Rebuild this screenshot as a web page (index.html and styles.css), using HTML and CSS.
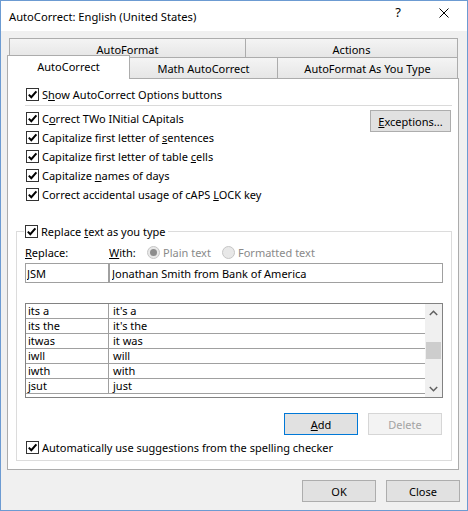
FILE: index.html
```html
<!DOCTYPE html>
<html lang="en">
<head>
<meta charset="utf-8">
<title>AutoCorrect: English (United States)</title>
<link rel="stylesheet" href="styles.css">
</head>
<body>
<div class="window">
  <div class="titlebar">
    <span class="title">AutoCorrect: English (United States)</span>
    <div class="caption-buttons">
      <span class="cap-btn help">?</span>
      <span class="cap-btn close"><svg width="10" height="10" viewBox="0 0 10 10"><path d="M0.5 0.5L9.5 9.5M9.5 0.5L0.5 9.5" stroke="#000" stroke-width="1" fill="none"/></svg></span>
    </div>
  </div>
  <div class="client">
    <div class="tabs">
      <div class="tab-row back">
        <div class="tab t-autoformat">AutoFormat</div>
        <div class="tab t-actions">Actions</div>
      </div>
      <div class="tab-row front">
        <div class="tab selected">AutoCorrect</div>
        <div class="tab t-math">Math AutoCorrect</div>
        <div class="tab t-afayt">AutoFormat As You Type</div>
      </div>
    </div>
    <div class="panel">
      <div class="top-section">
        <div class="check-row"><span class="cb"><svg width="11" height="11" viewBox="0 0 11 11"><path d="M1.8 5.6L4.3 8.2L9.4 2.3" stroke="#000" stroke-width="2" fill="none"/></svg></span><span>S<u>h</u>ow AutoCorrect Options buttons</span></div>
        <div class="separator"></div>
        <div class="options">
          <div class="checks">
            <div class="check-row"><span class="cb"><svg width="11" height="11" viewBox="0 0 11 11"><path d="M1.8 5.6L4.3 8.2L9.4 2.3" stroke="#000" stroke-width="2" fill="none"/></svg></span><span>C<u>o</u>rrect TWo INitial CApitals</span></div>
            <div class="check-row"><span class="cb"><svg width="11" height="11" viewBox="0 0 11 11"><path d="M1.8 5.6L4.3 8.2L9.4 2.3" stroke="#000" stroke-width="2" fill="none"/></svg></span><span>Capitalize first letter of <u>s</u>entences</span></div>
            <div class="check-row"><span class="cb"><svg width="11" height="11" viewBox="0 0 11 11"><path d="M1.8 5.6L4.3 8.2L9.4 2.3" stroke="#000" stroke-width="2" fill="none"/></svg></span><span>Capitalize first letter of table <u>c</u>ells</span></div>
            <div class="check-row"><span class="cb"><svg width="11" height="11" viewBox="0 0 11 11"><path d="M1.8 5.6L4.3 8.2L9.4 2.3" stroke="#000" stroke-width="2" fill="none"/></svg></span><span>Capitalize <u>n</u>ames of days</span></div>
            <div class="check-row"><span class="cb"><svg width="11" height="11" viewBox="0 0 11 11"><path d="M1.8 5.6L4.3 8.2L9.4 2.3" stroke="#000" stroke-width="2" fill="none"/></svg></span><span>Correct accidental usage of cAPS <u>L</u>OCK key</span></div>
          </div>
          <button class="btn exceptions"><u>E</u>xceptions...</button>
        </div>
      </div>
      <fieldset class="group">
        <legend class="legend"><span class="check-row"><span class="cb"><svg width="11" height="11" viewBox="0 0 11 11"><path d="M1.8 5.6L4.3 8.2L9.4 2.3" stroke="#000" stroke-width="2" fill="none"/></svg></span><span>Replace <u>t</u>ext as you type</span></span></legend>
        <div class="labels-row">
          <span class="lbl-replace"><u>R</u>eplace:</span>
          <span class="lbl-with"><u>W</u>ith:</span>
          <span class="radio-item plain"><span class="radio on"></span><span>Plain text</span></span>
          <span class="radio-item"><span class="radio"></span><span>Formatted text</span></span>
        </div>
        <div class="inputs-row">
          <input class="field f-replace" type="text" value="JSM">
          <input class="field f-with" type="text" value="Jonathan Smith from Bank of America">
        </div>
        <div class="list">
          <div class="rows">
            <div class="row"><span class="c1">its a</span><span class="c2">it's a</span></div>
            <div class="row"><span class="c1">its the</span><span class="c2">it's the</span></div>
            <div class="row"><span class="c1">itwas</span><span class="c2">it was</span></div>
            <div class="row"><span class="c1">iwll</span><span class="c2">will</span></div>
            <div class="row"><span class="c1">iwth</span><span class="c2">with</span></div>
            <div class="row"><span class="c1">jsut</span><span class="c2">just</span></div>
          </div>
          <div class="scrollbar">
            <div class="sb-arrow"><svg width="9" height="6" viewBox="0 0 9 6"><path d="M0.8 5L4.5 1.3L8.2 5" stroke="#606060" stroke-width="1.5" fill="none"/></svg></div>
            <div class="sb-track"><div class="sb-thumb"></div></div>
            <div class="sb-arrow"><svg width="9" height="6" viewBox="0 0 9 6"><path d="M0.8 1L4.5 4.7L8.2 1" stroke="#606060" stroke-width="1.5" fill="none"/></svg></div>
          </div>
        </div>
        <div class="list-buttons">
          <button class="btn default"><u>A</u>dd</button>
          <button class="btn" disabled>Delete</button>
        </div>
        <div class="check-row"><span class="cb"><svg width="11" height="11" viewBox="0 0 11 11"><path d="M1.8 5.6L4.3 8.2L9.4 2.3" stroke="#000" stroke-width="2" fill="none"/></svg></span><span>Automatically use su<u>g</u>gestions from the spelling checker</span></div>
      </fieldset>
    </div>
    <div class="footer">
      <button class="btn">OK</button>
      <button class="btn">Close</button>
    </div>
  </div>
</div>
</body>
</html>
```
FILE: styles.css
```css
* { box-sizing: border-box; }
html, body { margin: 0; padding: 0; }
body {
  width: 468px;
  height: 511px;
  font-family: "Noto Sans", "Open Sans", sans-serif;
  font-size: 11px;
  color: #000;
  background: #fff;
}
u { text-decoration: underline; text-underline-offset: 1px; }

.window {
  width: 468px;
  height: 511px;
  border: 1px solid #6c9bd2;
  background: #f0f0f0;
  display: flex;
  flex-direction: column;
}
.titlebar {
  height: 30px;
  flex: none;
  background: #fff;
  display: flex;
  align-items: center;
  padding-left: 8px;
}
.title { flex: 1; font-size: 11.2px; }
.caption-buttons { display: flex; align-self: flex-start; height: 23px; }
.cap-btn { width: 46px; display: flex; align-items: center; justify-content: center; }
.help { font-size: 13px; line-height: 1; }

.client {
  flex: 1;
  display: flex;
  flex-direction: column;
  padding: 7px 7px 8px 6px;
}
.tabs { margin-right: 1px; }
.tab-row { display: flex; margin-right: 1px; }
.tab {
  display: flex;
  align-items: center;
  justify-content: center;
  background: linear-gradient(#f4f4f4, #e6e6e6);
  border-top: 1px solid #acacac;
  border-right: 1px solid #acacac;
  white-space: nowrap;
}
.back { margin-left: 2px; height: 19px; }
.back .tab { height: 19px; padding-top: 2px; }
.t-autoformat { width: 236px; border-left: 1px solid #acacac; border-right: none; }
.t-actions { width: 213px; border-left: 1px solid #acacac; }
.front {
  margin-top: -2px;
  align-items: flex-start;
  position: relative;
  z-index: 1;
}
.front .tab { height: 21px; margin-top: 2px; }
.front .selected {
  width: 123px;
  height: 24px;
  margin-top: 0;
  padding-bottom: 3px;
  background: #fff;
  border-left: 1px solid #acacac;
}
.t-math { width: 148px; }
.t-afayt { width: 180px; }

.panel {
  height: 392px;
  flex: none;
  margin-top: -1px;
  margin-right: 1px;
  background: #fff;
  border: 1px solid #acacac;
  padding: 6px 6px 8px 8px;
  display: flex;
  flex-direction: column;
}
.top-section { margin-left: 9px; }
.check-row {
  display: flex;
  align-items: center;
  height: 19px;
  padding-left: 1px;
  gap: 3px;
  white-space: nowrap;
}
.cb {
  width: 13px;
  height: 13px;
  flex: none;
  border: 1px solid #333;
  background: #fff;
  display: flex;
}
.cb svg { display: block; }
.separator { height: 1px; margin: 1px 0 3px; background: #dadada; }
.options { display: flex; align-items: flex-start; }
.checks { flex: 1; }

.btn {
  width: 74px;
  height: 22px;
  padding: 0;
  font: inherit;
  color: #000;
  background: #e1e1e1;
  border: 1px solid #adadad;
  display: flex;
  align-items: center;
  justify-content: center;
}
.exceptions { width: 81px; margin-top: 1px; margin-right: 1px; }
.btn.default { border-color: #0078d7; }
.btn:disabled { background: #f3f3f3; border-color: #d6d6d6; color: #a3a3a3; }

.group {
  margin: 18px 0 0;
  padding: 0 8px 3px;
  border: 1px solid #dcdcdc;
  min-width: 0;
}
.legend { padding: 0 2px 0 1px; margin-left: -1px; }
.legend .check-row { padding-left: 0; }
.labels-row { display: flex; align-items: center; height: 22px; white-space: nowrap; }
.lbl-replace { width: 84px; }
.lbl-with { width: 38px; }
.radio-item { display: flex; align-items: center; gap: 3px; color: #8a8a8a; }
.radio-item.plain { width: 75px; }
.radio {
  width: 13px;
  height: 13px;
  border-radius: 50%;
  border: 1px solid #c6c6c6;
  background: #e8e8e8;
  display: flex;
  align-items: center;
  justify-content: center;
}
.radio.on::after {
  content: "";
  width: 7px;
  height: 7px;
  border-radius: 50%;
  background: #8c8c8c;
}
.inputs-row { display: flex; height: 20px; }
.field {
  height: 20px;
  margin: 0;
  font: inherit;
  color: #000;
  border: 1px solid #a0a0a0;
  background: #fff;
  outline: none;
}
.f-replace { width: 84px; padding: 0 1px; }
.f-with { flex: 1; min-width: 0; padding: 0 2px; }

.list {
  margin-top: 20px;
  height: 95px;
  border: 1px solid #828282;
  display: flex;
  background: #fff;
}
.rows { flex: 1; overflow: hidden; }
.row {
  display: flex;
  height: 15px;
  line-height: 14px;
  border-bottom: 1px solid #a0a0a0;
  white-space: nowrap;
}
.c1 { width: 82px; padding-left: 2px; }
.c2 { flex: 1; padding-left: 4px; border-left: 1px solid #a0a0a0; }
.scrollbar {
  width: 17px;
  flex: none;
  background: #f0f0f0;
  display: flex;
  flex-direction: column;
}
.sb-arrow { height: 17px; display: flex; align-items: center; justify-content: center; }
.sb-track { flex: 1; }
.sb-thumb { margin: 21px 1px 0; height: 17px; background: #cdcdcd; }

.list-buttons {
  display: flex;
  justify-content: flex-end;
  gap: 10px;
  margin: 15px 1px 0 0;
}
.list-buttons + .check-row { margin-top: 3px; }

.footer {
  display: flex;
  justify-content: flex-end;
  gap: 10px;
  margin-top: 10px;
}
```
